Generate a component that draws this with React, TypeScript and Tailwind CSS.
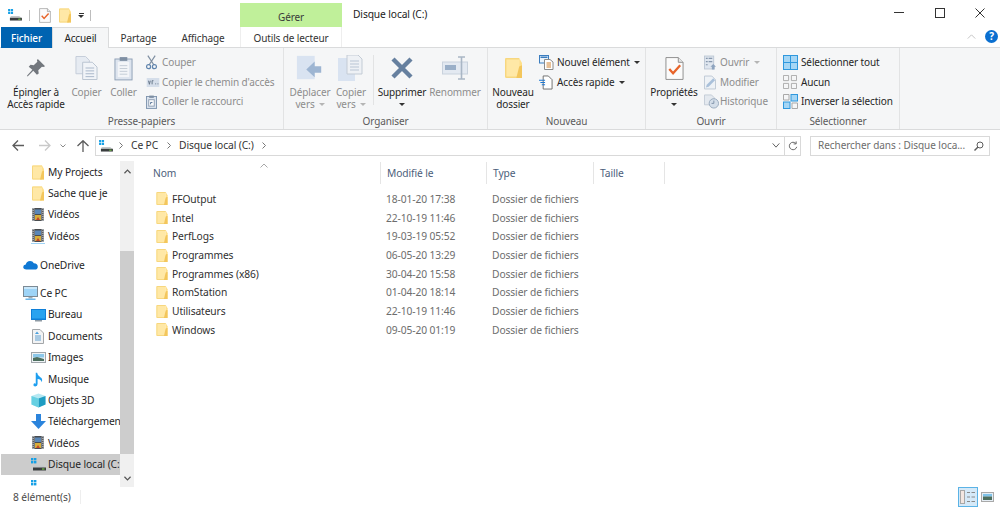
import React from 'react';

type IconProps = { className?: string };

function Folder({ className = 'w-[12px] h-[14px]' }: IconProps) {
  return (
    <svg viewBox="0 0 12 14" className={className}>
      <path d="M0 1 Q0 0 1 0 H10 V14 H1 Q0 14 0 13 Z" fill="#ffe8a6" />
      <path d="M0 1 Q0 0 1 0 H10 V1 H1 V13 H10 V14 H1 Q0 14 0 13 Z" fill="#f7d77f" />
      <path d="M10 0 V14 H12 V3.5 Z" fill="#ffe08a" />
      <path d="M10 6 L12 5 V14 H8 Z" fill="#f3c65c" />
    </svg>
  );
}

function Drive({ className = 'w-[15px] h-[13px]' }: IconProps) {
  return (
    <svg viewBox="0 0 15 13" className={className}>
      <rect x="0" y="0" width="2.4" height="2.4" fill="#16a0e6" />
      <rect x="3" y="0" width="2.4" height="2.4" fill="#16a0e6" />
      <rect x="0" y="3" width="2.4" height="2.4" fill="#16a0e6" />
      <rect x="3" y="3" width="2.4" height="2.4" fill="#16a0e6" />
      <path d="M3 7.5 H12 L14.5 9.5 H2 Z" fill="#c4c8cb" />
      <rect x="2" y="9.5" width="13" height="3" fill="#3a3d3f" />
      <rect x="11" y="10.5" width="2.5" height="1" fill="#7ee04a" />
    </svg>
  );
}

function PropsIcon({ className = 'w-[12px] h-[15px]' }: IconProps) {
  return (
    <svg viewBox="0 0 20 25" className={className}>
      <path d="M1 1 H14 L19 6 V24 H1 Z" fill="#fbfbfb" stroke="#8c8c8c" strokeWidth="1" />
      <path d="M14 1 V6 H19" fill="#e6e6e6" stroke="#8c8c8c" strokeWidth="1" />
      <path d="M4.5 13 L8.5 17.5 L16 9" fill="none" stroke="#e8642a" strokeWidth="2.4" />
    </svg>
  );
}

function Film({ underline }: { underline?: boolean }) {
  return (
    <svg viewBox="0 0 14 16" className="w-[14px] h-[16px]">
      <rect x="1" y="1" width="12" height="13" fill="#4a4d50" />
      <rect x="1" y="1" width="2.5" height="13" fill="#a4a8ac" />
      <rect x="10.5" y="1" width="2.5" height="13" fill="#a4a8ac" />
      <path d="M2.2 2 V14 M11.8 2 V14" stroke="#3a3d40" strokeWidth="1" strokeDasharray="1 1" />
      <rect x="4" y="2.5" width="6" height="4.5" fill="#5a87b8" />
      <rect x="4" y="8" width="6" height="5" fill="#d8ae3a" />
      <path d="M5 13 L7 10 L9 13 Z" fill="#c2452d" />
      {underline && <rect x="0" y="15" width="14" height="1" fill="#9fd3f5" />}
    </svg>
  );
}

function Cloud() {
  return (
    <svg viewBox="0 0 16 11" className="w-[15px] h-[10px]">
      <path d="M3.5 10.5 Q0 10.5 0 7.8 Q0 5.4 2.8 5 Q3.6 1 7.5 1 Q10.5 1 11.7 3.7 Q16 3.8 16 7.4 Q16 10.5 12.8 10.5 Z" fill="#0f78d4" />
    </svg>
  );
}

function Monitor() {
  return (
    <svg viewBox="0 0 15 15" className="w-[15px] h-[15px]">
      <rect x="0.5" y="0.5" width="14" height="10" fill="#9ed4f7" stroke="#7c8a95" />
      <rect x="1" y="1" width="13" height="2" fill="#c9e8fb" />
      <rect x="5.5" y="11" width="4" height="1.5" fill="#a5adb3" />
      <rect x="2.5" y="12.5" width="10" height="1.5" fill="#6db7ea" />
    </svg>
  );
}

function Desktop() {
  return (
    <svg viewBox="0 0 15 13" className="w-[15px] h-[13px]">
      <rect x="0" y="0" width="15" height="11" fill="#0f7fd8" />
      <rect x="1" y="1" width="13" height="8.5" fill="#29a3f0" />
      <rect x="4" y="11" width="7" height="1.5" fill="#8e9aa4" />
    </svg>
  );
}

function DocIcon() {
  return (
    <svg viewBox="0 0 12 15" className="w-[12px] h-[15px]">
      <path d="M0.5 0.5 H8 L11.5 4 V14.5 H0.5 Z" fill="#f2f3f4" stroke="#a3a6a9" />
      <path d="M5 2.5 L3 5 H7 Z" fill="#4aa0dc" />
      <path d="M3 7 H9 M3 9 H9 M3 11 H9" stroke="#5f9fd0" strokeWidth="1" />
    </svg>
  );
}

function ImageIcon() {
  return (
    <svg viewBox="0 0 15 11" className="w-[15px] h-[11px]">
      <rect x="0.5" y="0.5" width="14" height="10" fill="#eef3f6" stroke="#a0a6ab" />
      <rect x="2" y="2" width="11" height="3.5" fill="#8cc8ea" />
      <path d="M2 9 V6 L6 5 L13 7 V9 Z" fill="#4d6f5f" />
    </svg>
  );
}

function Note() {
  return (
    <svg viewBox="0 0 12 15" className="w-[11px] h-[15px]">
      <path d="M3 12 V0 H4.5 Q5 3.5 8 5 Q11 6.5 9.5 10.5 Q9 7.5 5 7 V12.5 Q5 15 2.5 15 Q0 15 0.5 13 Q1 11 3 12 Z" fill="#1e9ff0" />
    </svg>
  );
}

function Cube() {
  return (
    <svg viewBox="0 0 15 15" className="w-[15px] h-[15px]">
      <path d="M7.5 0.5 L14.5 3 V11.5 L7.5 14.5 L0.5 11.5 V3 Z" fill="#b5e8f2" />
      <path d="M7.5 5.5 L14.5 3 V11.5 L7.5 14.5 Z" fill="#1e9cc2" />
      <path d="M7.5 5.5 L0.5 3 V11.5 L7.5 14.5 Z" fill="#66d0e2" />
    </svg>
  );
}

function Download() {
  return (
    <svg viewBox="0 0 15 15" className="w-[15px] h-[15px]">
      <path d="M5 0 H10 V7 H15 L7.5 15 L0 7 H5 Z" fill="#2b84dc" />
    </svg>
  );
}

function BigDisabledArrow() {
  return (
    <svg viewBox="0 0 30 26" className="w-[28px] h-[26px]">
      <rect x="1" y="0" width="19" height="25" fill="#d9e3f1" />
      <path d="M24 9 V16 H17 V21 L8 12.5 L17 4 V9 Z" fill="#9db5d2" transform="translate(3 2)" />
    </svg>
  );
}

function BigCopyTo() {
  return (
    <svg viewBox="0 0 26 26" className="w-[26px] h-[26px]">
      <rect x="0" y="3" width="17" height="23" fill="#d9e3f1" />
      <path d="M9 0 H20 L24 4 V19 H9 Z" fill="#eef1f5" stroke="#c3cbd5" />
      <path d="M12 6 H21 M12 9 H21 M12 12 H21 M12 15 H21" stroke="#b9c5d4" />
    </svg>
  );
}

function RibbonIcon({ name }: { name: string }) {
  switch (name) {
    case 'pin':
      return (
        <svg viewBox="0 0 22 22" className="w-[20px] h-[20px]">
          <path d="M13 1 L21 9 L19 10 L17.5 9.5 L13.5 13.5 L14 17 L12 18.5 L8 14 L2 20 L1 20 L1.5 19 L7 13 L3 9.5 L5 7.5 L8.5 8 L12.5 4 L12 2.5 Z" fill="#72777d" />
        </svg>
      );
    case 'copy':
      return (
        <svg viewBox="0 0 24 26" className="w-[23px] h-[26px]">
          <path d="M1 1 H11 L15 5 V19 H1 Z" fill="#e6ebf2" stroke="#c3ccd8" />
          <path d="M8 7 H18 L23 12 V25 H8 Z" fill="#f1f4f8" stroke="#b9c3d0" />
          <path d="M11 13 H20 M11 16 H20 M11 19 H20 M11 22 H20" stroke="#a7b6c9" />
        </svg>
      );
    case 'paste':
      return (
        <svg viewBox="0 0 20 26" className="w-[19px] h-[25px]">
          <rect x="1" y="3" width="18" height="22" fill="#dde4ee" stroke="#8ea0b6" />
          <rect x="4" y="6" width="12" height="16" fill="#f3f5f8" />
          <rect x="6" y="1" width="8" height="4" fill="#7f8fa3" />
          <path d="M6 10 H14 M6 13 H14 M6 16 H14 M6 19 H14" stroke="#c3cbd5" />
        </svg>
      );
    case 'cut':
      return (
        <svg viewBox="0 0 12 15" className="w-[11px] h-[15px]">
          <path d="M2 0 L8.5 10 M10 0 L3.5 10" stroke="#7e8ea1" strokeWidth="1.3" fill="none" />
          <circle cx="2.8" cy="12" r="2.2" fill="none" stroke="#5f84ad" strokeWidth="1.3" />
          <circle cx="9.2" cy="12" r="2.2" fill="none" stroke="#5f84ad" strokeWidth="1.3" />
        </svg>
      );
    case 'path':
      return (
        <svg viewBox="0 0 14 10" className="w-[14px] h-[9px]">
          <rect x="0" y="0" width="14" height="10" fill="#d5deea" />
          <path d="M2 3 L3 7 L4 3 M6 7 V3 H7.5 M9.5 6.5 H10.5 M12 6.5 H13" stroke="#5e6e82" fill="none" />
        </svg>
      );
    case 'shortcut':
      return (
        <svg viewBox="0 0 12 15" className="w-[11px] h-[14px]">
          <rect x="0.5" y="1.5" width="11" height="13" fill="#dbe3ee" stroke="#7d93ad" />
          <rect x="3.5" y="0.5" width="5" height="2.5" fill="#7d8ea3" />
          <rect x="3" y="5" width="6" height="7" fill="#fafbfc" stroke="#8a9bb0" />
          <path d="M5 10 V8 H7" stroke="#4d6b90" fill="none" />
        </svg>
      );
    case 'delete':
      return (
        <svg viewBox="0 0 24 24" className="w-[24px] h-[24px]">
          <path d="M3 3 L21 21 M21 3 L3 21" stroke="#66809f" strokeWidth="4.4" />
        </svg>
      );
    case 'rename':
      return (
        <svg viewBox="0 0 26 24" className="w-[26px] h-[24px]">
          <rect x="0.5" y="6" width="25" height="12" fill="#e3e9f1" stroke="#c9d2dd" />
          <rect x="3" y="9" width="11" height="5" fill="#9aafc8" />
          <path d="M16 1 H23 M19.5 1 V23 M16 23 H23" stroke="#a9b6c5" strokeWidth="1.6" fill="none" />
        </svg>
      );
    case 'newFolder':
      return <Folder className="w-[17px] h-[24px]" />;
    case 'newItem':
      return (
        <svg viewBox="0 0 15 15" className="w-[15px] h-[15px]">
          <rect x="0.5" y="0.5" width="9" height="7.5" fill="#eaf3fb" stroke="#3b7dbf" />
          <rect x="1.5" y="1.5" width="7" height="1.5" fill="#3b7dbf" />
          <path d="M5.5 4.5 H11 L14 7 V14.5 H5.5 Z" fill="#fff" stroke="#8a8a8a" />
          <path d="M7.5 8 H12 M7.5 10 H12 M7.5 12 H12" stroke="#d0812e" />
        </svg>
      );
    case 'quick':
      return (
        <svg viewBox="0 0 15 15" className="w-[14px] h-[15px]">
          <path d="M4.5 0.5 H10 L14 4.5 V14.5 H4.5 Z" fill="#fff" stroke="#6b6b6b" />
          <path d="M0 5 H6.5 M1.5 7.5 H6.5 M3 10 H6.5" stroke="#1f78d1" strokeWidth="1.1" />
        </svg>
      );
    case 'props':
      return <PropsIcon className="w-[19px] h-[25px]" />;
    case 'open':
      return (
        <svg viewBox="0 0 13 15" className="w-[12px] h-[15px]">
          <rect x="0.5" y="0.5" width="10" height="14" fill="#dfe6ef" stroke="#bcc7d4" />
          <path d="M2 3 H4 M5 3 H9 M2 6.5 H4 M5 6.5 H9 M2 10 H4" stroke="#8798ad" strokeWidth="1.2" />
          <path d="M10 9 L13 12 H11.5 V15 H8.5 V12 H7 Z" fill="#8ea4bf" />
        </svg>
      );
    case 'edit':
      return (
        <svg viewBox="0 0 13 15" className="w-[12px] h-[15px]">
          <path d="M0.5 0.5 H8.5 L12.5 4.5 V14.5 H0.5 Z" fill="#eef2f6" stroke="#bcc7d4" />
          <path d="M2 13 L3 10 L10 3 L12 5 L5 12 Z" fill="#a9c0da" />
        </svg>
      );
    case 'history':
      return (
        <svg viewBox="0 0 16 15" className="w-[15px] h-[15px]">
          <path d="M0.5 0.5 H8 L11 3.5 V11 H0.5 Z" fill="#e4e9ef" stroke="#c3ccd6" />
          <circle cx="10.5" cy="9.5" r="5" fill="#d4dee9" stroke="#98a9bc" />
          <path d="M10.5 6.5 V9.5 H8" stroke="#7e91a7" fill="none" />
        </svg>
      );
    case 'all':
      return (
        <svg viewBox="0 0 15 15" className="w-[15px] h-[15px]">
          <rect x="0.5" y="0.5" width="14" height="14" fill="#a5d6f5" stroke="#2f98de" />
          <path d="M7.5 0.5 V14.5 M0.5 7.5 H14.5" stroke="#2f98de" />
        </svg>
      );
    case 'none':
      return (
        <svg viewBox="0 0 15 15" className="w-[14px] h-[14px]">
          <path d="M0.5 0.5 H6 V6 H0.5 Z M9 0.5 H14.5 V6 H9 Z M0.5 9 H6 V14.5 H0.5 Z M9 9 H14.5 V14.5 H9 Z" fill="none" stroke="#a9a9a9" />
        </svg>
      );
    default:
      return (
        <svg viewBox="0 0 15 15" className="w-[15px] h-[15px]">
          <rect x="8" y="0.5" width="6.5" height="6.5" fill="#a5d6f5" stroke="#2f98de" />
          <rect x="0.5" y="8" width="6.5" height="6.5" fill="#a5d6f5" stroke="#2f98de" />
          <path d="M0.5 0.5 H6 V6 H0.5 Z M9 9 H14.5 V14.5 H9 Z" fill="none" stroke="#a9a9a9" />
        </svg>
      );
  }
}

function Caret({ className = 'border-t-[#444]' }: IconProps) {
  return <span className={`inline-block w-0 h-0 border-x-[3px] border-x-transparent border-t-[3px] ${className}`}></span>;
}

function Chevron({ className = '' }: IconProps) {
  return (
    <svg viewBox="0 0 4 7" className={`w-[4px] h-[7px] shrink-0 ${className}`}>
      <path d="M0.5 0.5 L3.5 3.5 L0.5 6.5" fill="none" stroke="#777" />
    </svg>
  );
}

function BigButton({ icon, lines, width, dim, caret, dimCaret }: {
  icon: React.ReactNode; lines: string[]; width: string; dim?: boolean; caret?: boolean; dimCaret?: boolean;
}) {
  return (
    <div className={`${width} flex flex-col items-center shrink-0`}>
      <div className="h-[36px] shrink-0 flex items-center justify-center">{icon}</div>
      <div className={`text-center leading-[12px] whitespace-nowrap shrink-0 ${dim ? 'text-[#8d8d8d]' : 'text-[#262626]'}`}>
        <div>{lines[0]}</div>
        {lines[1] && (
          <div className="flex items-center justify-center gap-[4px]">
            {lines[1]}
            {dimCaret && <Caret className="border-t-[#b5b5b5]" />}
          </div>
        )}
        {caret && <div className="flex justify-center h-[12px] items-center"><Caret className="border-t-[#333]" /></div>}
      </div>
    </div>
  );
}

function SmallRow({ icon, label, dim, caret, dimCaret, iconWidth }: {
  icon: string; label: string; dim?: boolean; caret?: boolean; dimCaret?: boolean; iconWidth: string;
}) {
  return (
    <div className={`flex items-center h-[19.5px] whitespace-nowrap ${dim ? 'text-[#8d8d8d]' : 'text-[#262626]'}`}>
      <div className={`${iconWidth} flex justify-start shrink-0`}><RibbonIcon name={icon} /></div>
      <span>{label}</span>
      {caret && <Caret className="ml-[4px] border-t-[#333]" />}
      {dimCaret && <Caret className="ml-[5px] border-t-[#b5b5b5]" />}
    </div>
  );
}

function Group({ label, width, children }: { label: string; width: string; children: React.ReactNode }) {
  return (
    <div className={`${width} shrink-0 flex flex-col h-full border-r border-[#e2e3e4]`}>
      <div className="flex flex-1 pt-[2px] min-h-0">{children}</div>
      <div className="text-center text-[#5b5b5b] h-[17px] leading-[18px]">{label}</div>
    </div>
  );
}

const navItems: { label: string; icon: React.ReactNode; indent: string; gap?: string; selected?: boolean }[] = [
  { label: 'My Projects', icon: <Folder className="w-[12px] h-[15px]" />, indent: 'pl-[30px]' },
  { label: 'Sache que je', icon: <Folder className="w-[12px] h-[15px]" />, indent: 'pl-[30px]' },
  { label: 'Vidéos', icon: <Film />, indent: 'pl-[30px]' },
  { label: 'Vidéos', icon: <Film underline />, indent: 'pl-[30px]' },
  { label: 'OneDrive', icon: <Cloud />, indent: 'pl-[22px]', gap: 'mt-[7.5px]' },
  { label: 'Ce PC', icon: <Monitor />, indent: 'pl-[22px]', gap: 'mt-[7px]' },
  { label: 'Bureau', icon: <Desktop />, indent: 'pl-[30px]' },
  { label: 'Documents', icon: <DocIcon />, indent: 'pl-[30px]' },
  { label: 'Images', icon: <ImageIcon />, indent: 'pl-[30px]' },
  { label: 'Musique', icon: <Note />, indent: 'pl-[30px]' },
  { label: 'Objets 3D', icon: <Cube />, indent: 'pl-[30px]' },
  { label: 'Téléchargements', icon: <Download />, indent: 'pl-[30px]' },
  { label: 'Vidéos', icon: <Film />, indent: 'pl-[30px]' },
  { label: 'Disque local (C:)', icon: <Drive />, indent: 'pl-[30px]', selected: true },
  { label: '', icon: <Drive />, indent: 'pl-[30px]' },
];

const files = [
  ['FFOutput', '18-01-20 17:38'],
  ['Intel', '22-10-19 11:46'],
  ['PerfLogs', '19-03-19 05:52'],
  ['Programmes', '06-05-20 13:29'],
  ['Programmes (x86)', '30-04-20 15:58'],
  ['RomStation', '01-04-20 18:14'],
  ['Utilisateurs', '22-10-19 11:46'],
  ['Windows', '09-05-20 01:19'],
];

export default function App() {
  return (
    <div className="w-[1000px] h-[507px] overflow-hidden bg-white flex flex-col font-['Noto_Sans',sans-serif] text-[10px] tracking-[-0.12px] text-[#262626]">
      {/* title bar */}
      <div className="h-[27px] flex shrink-0">
        <div className="w-[240px] flex items-center pl-[8px] pt-[3px]">
          <Drive className="w-[14px] h-[12px]" />
          <div className="w-px h-[11px] bg-[#bdbdbd] ml-[7px]"></div>
          <div className="ml-[9px] flex"><PropsIcon /></div>
          <div className="ml-[8px] flex"><Folder className="w-[12px] h-[15px]" /></div>
          <div className="ml-[7px] flex flex-col items-center gap-[1px]">
            <div className="w-[5px] h-px bg-[#333]"></div>
            <Caret className="border-t-[#333]" />
          </div>
          <div className="w-px h-[11px] bg-[#bdbdbd] ml-[6px]"></div>
        </div>
        <div className="w-[102px] mt-[3px] pt-[5px] bg-[#c0f09a] flex items-center justify-center text-[#3a3a3a]">Gérer</div>
        <div className="pl-[11px] pt-[7px] text-[10.25px] leading-[14px] text-[#222] flex-1">Disque local (C:)</div>
        <div className="flex h-[27px] pt-[6px]">
          <div className="w-[40px] flex justify-center pt-[6px]"><div className="w-[10px] h-px bg-[#333]"></div></div>
          <div className="w-[41px] flex justify-center pt-[2px]"><div className="w-[10px] h-[10px] border border-[#333]"></div></div>
          <div className="w-[40px] flex justify-center pt-[2px]">
            <svg viewBox="0 0 10 10" className="w-[10px] h-[10px]"><path d="M0.5 0.5 L9.5 9.5 M9.5 0.5 L0.5 9.5" stroke="#333" /></svg>
          </div>
        </div>
      </div>

      {/* tabs */}
      <div className="h-[21px] flex shrink-0 border-b border-[#dadbdc] leading-[22px]">
        <div className="w-[51px] ml-px bg-[#0063b1] text-white text-center font-medium h-[21px]">Fichier</div>
        <div className="w-[57px] h-[21px] bg-[#f5f6f7] border-x border-t border-[#dadbdc] text-center text-[#222] leading-[20px]">Accueil</div>
        <div className="w-[59px] text-center text-[#333]">Partage</div>
        <div className="w-[72px] pr-[2px] text-center text-[#333]">Affichage</div>
        <div className="w-[102px] border-x border-[#eee] text-center text-[#333]">Outils de lecteur</div>
        <div className="flex-1 flex justify-end items-center pr-[2px] pb-[2px] gap-[9px]">
          <svg viewBox="0 0 10 6" className="w-[9px] h-[5px]"><path d="M0.5 5.5 L5 1 L9.5 5.5" fill="none" stroke="#b9b9b9" /></svg>
          <div className="w-[13px] h-[13px] rounded-full bg-[#0a6fd0] text-white font-bold text-[10px] leading-[13px] text-center">?</div>
        </div>
      </div>

      {/* ribbon */}
      <div className="h-[82px] flex shrink-0 bg-[#f5f6f7] border-b border-[#dadbdc]">
        <Group label="Presse-papiers" width="w-[284px]">
          <BigButton width="w-[72px]" lines={['Épingler à', 'Accès rapide']} icon={<RibbonIcon name="pin" />} />
          <BigButton width="w-[29px]" dim lines={['Copier']} icon={<RibbonIcon name="copy" />} />
          <BigButton width="w-[45px]" dim lines={['Coller']} icon={<RibbonIcon name="paste" />} />
          <div className="flex flex-col pt-[3px]">
            <SmallRow icon="cut" label="Couper" dim iconWidth="w-[16px]" />
            <SmallRow icon="path" label="Copier le chemin d'accès" dim iconWidth="w-[16px]" />
            <SmallRow icon="shortcut" label="Coller le raccourci" dim iconWidth="w-[16px]" />
          </div>
        </Group>
        <Group label="Organiser" width="w-[204px]">
          <BigButton width="w-[52px]" dim dimCaret lines={['Déplacer', 'vers']} icon={<BigDisabledArrow />} />
          <BigButton width="w-[30px]" dim dimCaret lines={['Copier', 'vers']} icon={<BigCopyTo />} />
          <div className="w-px h-[50px] bg-[#e2e3e4] ml-[7px] mt-[5px]"></div>
          <BigButton width="w-[56px]" caret lines={['Supprimer']} icon={<RibbonIcon name="delete" />} />
          <BigButton width="w-[50px]" dim lines={['Renommer']} icon={<RibbonIcon name="rename" />} />
        </Group>
        <Group label="Nouveau" width="w-[158px]">
          <BigButton width="w-[50px]" lines={['Nouveau', 'dossier']} icon={<RibbonIcon name="newFolder" />} />
          <div className="flex flex-col pt-[3px] pl-px">
            <SmallRow icon="newItem" label="Nouvel élément" caret iconWidth="w-[18px]" />
            <SmallRow icon="quick" label="Accès rapide" caret iconWidth="w-[18px]" />
          </div>
        </Group>
        <Group label="Ouvrir" width="w-[131px]">
          <BigButton width="w-[56px]" caret lines={['Propriétés']} icon={<RibbonIcon name="props" />} />
          <div className="flex flex-col pt-[3px] pl-[2px]">
            <SmallRow icon="open" label="Ouvrir" dim dimCaret iconWidth="w-[16px]" />
            <SmallRow icon="edit" label="Modifier" dim iconWidth="w-[16px]" />
            <SmallRow icon="history" label="Historique" dim iconWidth="w-[16px]" />
          </div>
        </Group>
        <Group label="Sélectionner" width="w-[123px]">
          <div className="flex flex-col pt-[3px] pl-[6px]">
            <SmallRow icon="all" label="Sélectionner tout" iconWidth="w-[18px]" />
            <SmallRow icon="none" label="Aucun" iconWidth="w-[18px]" />
            <SmallRow icon="invert" label="Inverser la sélection" iconWidth="w-[18px]" />
          </div>
        </Group>
      </div>

      {/* nav bar */}
      <div className="h-[31px] shrink-0 flex items-center">
        <div className="w-[95px] flex items-center pl-[12px] shrink-0">
          <svg viewBox="0 0 12 11" className="w-[12px] h-[11px]"><path d="M6 0.5 L1 5.5 L6 10.5 M1 5.5 H12" fill="none" stroke="#5c5c5c" strokeWidth="1.3" /></svg>
          <svg viewBox="0 0 12 11" className="w-[12px] h-[11px] ml-[15px]"><path d="M6 0.5 L11 5.5 L6 10.5 M0 5.5 H11" fill="none" stroke="#c9c9c9" strokeWidth="1.3" /></svg>
          <svg viewBox="0 0 6 4" className="w-[6px] h-[4px] ml-[9px]"><path d="M0.5 0.5 L3 3 L5.5 0.5" fill="none" stroke="#8a8a8a" /></svg>
          <svg viewBox="0 0 12 12" className="w-[12px] h-[12px] ml-[11px]"><path d="M0.5 6 L6 0.7 L11.5 6 M6 0.7 V12" fill="none" stroke="#5c5c5c" strokeWidth="1.3" /></svg>
        </div>
        <div className="w-[706px] h-[20px] border border-[#d9d9d9] flex items-center shrink-0 text-[10.25px] tracking-[-0.1px] text-[#333]">
          <Drive className="ml-[3px] w-[14px] h-[12px] shrink-0" />
          <Chevron className="ml-[6px]" />
          <span className="ml-[8px]">Ce PC</span>
          <Chevron className="ml-[9px]" />
          <span className="ml-[8px]">Disque local (C:)</span>
          <Chevron className="ml-[8px]" />
          <div className="flex-1"></div>
          <svg viewBox="0 0 9 6" className="w-[8px] h-[5px] mr-[4px]"><path d="M0.5 0.5 L4.5 5 L8.5 0.5" fill="none" stroke="#555" strokeWidth="1.1" /></svg>
          <div className="w-[16px] h-full border-l border-[#d9d9d9] flex items-center justify-center">
            <svg viewBox="0 0 12 12" className="w-[10px] h-[10px]"><path d="M9.5 3 A4.5 4.5 0 1 0 10.5 7 M9.8 0.5 V3.5 H6.8" fill="none" stroke="#6a6a6a" strokeWidth="1.2" /></svg>
          </div>
        </div>
        <div className="ml-[9px] w-[180px] h-[20px] border border-[#d9d9d9] flex items-center pl-[7px] pr-[5px] text-[#6d6d6d] shrink-0 tracking-[-0.05px]">
          <span className="flex-1 whitespace-nowrap">Rechercher dans : Disque loca...</span>
          <svg viewBox="0 0 10 10" className="w-[10px] h-[10px]"><circle cx="6" cy="4" r="3" fill="none" stroke="#5c5c5c" /><path d="M4 6 L0.5 9.5" stroke="#5c5c5c" strokeWidth="1.4" /></svg>
        </div>
      </div>

      {/* main */}
      <div className="flex-1 min-h-0 flex text-[10.25px] tracking-[-0.1px]">
        <div className="w-[120px] shrink-0 overflow-hidden pt-[0.5px]">
          {navItems.map((item, i) => (
            <div key={i} className={`h-[21.4px] flex items-center whitespace-nowrap ml-px ${item.indent} ${item.gap ?? ''} ${item.selected ? 'bg-[#cccccc]' : ''} text-[#262626]`}>
              <div className="w-[16px] flex justify-center shrink-0 -ml-px">{item.icon}</div>
              <span className="ml-[2px]">{item.label}</span>
            </div>
          ))}
        </div>
        <div className="w-[14px] shrink-0 bg-[#f0f0f0] flex flex-col items-center">
          <div className="h-[90px] w-full flex justify-center pt-[8px]">
            <svg viewBox="0 0 8 5" className="w-[7px] h-[5px]"><path d="M0.5 4.5 L4 1 L7.5 4.5" fill="none" stroke="#555" strokeWidth="1.4" /></svg>
          </div>
          <div className="w-full h-[203px] bg-[#cdcdcd]"></div>
          <div className="flex-1 w-full flex justify-center items-end pb-[6px]">
            <svg viewBox="0 0 8 5" className="w-[7px] h-[5px]"><path d="M0.5 0.5 L4 4 L7.5 0.5" fill="none" stroke="#555" strokeWidth="1.4" /></svg>
          </div>
        </div>
        <div className="flex-1 min-w-0 relative">
          <svg viewBox="0 0 8 5" className="absolute left-[126px] top-[2px] w-[8px] h-[5px]"><path d="M0.5 4.5 L4 1 L7.5 4.5" fill="none" stroke="#a8a8a8" /></svg>
          <div className="flex h-[22px] mt-px text-[#4c607a] leading-[22px]">
            <div className="w-[246px] pl-[19px]">Nom</div>
            <div className="w-[106px] pl-[6px] border-l border-[#e5e5e5]">Modifié le</div>
            <div className="w-[107px] pl-[6px] border-l border-[#e5e5e5]">Type</div>
            <div className="w-[72px] pl-[6px] border-x border-[#e5e5e5]">Taille</div>
          </div>
          <div className="pt-[5.6px]">
            {files.map(([name, date]) => (
              <div key={name} className="h-[18.7px] flex items-center leading-none">
                <div className="w-[246px] flex items-center pl-[22px]">
                  <Folder className="w-[12px] h-[13px]" />
                  <span className="ml-[4px] text-[#303030]">{name}</span>
                </div>
                <div className="w-[106px] pl-[6px] text-[#6d6d6d]">{date}</div>
                <div className="pl-[6px] text-[#6d6d6d]">Dossier de fichiers</div>
              </div>
            ))}
          </div>
        </div>
      </div>

      {/* status bar */}
      <div className="h-[20px] shrink-0 flex items-center text-[10.25px] text-[#4a4a4a]">
        <div className="w-[81px] pl-[13px] border-r border-[#eeeeee] h-[14px] leading-[14px] whitespace-nowrap">8 élément(s)</div>
        <div className="flex-1"></div>
        <div className="w-[20px] h-[20px] bg-[#d5e9f8] border border-[#5bb3e6] flex items-center justify-center">
          <svg viewBox="0 0 16 14" className="w-[16px] h-[14px]">
            <rect x="0.5" y="0.5" width="4" height="13" fill="#f3e6e0" stroke="#a8a8a8" />
            <path d="M7 2.5 H10 M11.5 2.5 H15 M7 7 H10 M11.5 7 H15 M7 11.5 H10 M11.5 11.5 H15" stroke="#8a8a8a" />
          </svg>
        </div>
        <div className="ml-[3px] mr-[6px] w-[13px] h-[10px] flex">
          <svg viewBox="0 0 13 10" className="w-[13px] h-[10px]">
            <rect x="0.5" y="0.5" width="12" height="9" fill="#e6eef5" stroke="#a9a9a9" />
            <rect x="2" y="2" width="9" height="2.5" fill="#7fc3ea" />
            <rect x="2" y="4.5" width="9" height="3.5" fill="#4d6f5f" />
          </svg>
        </div>
      </div>
    </div>
  );
}
